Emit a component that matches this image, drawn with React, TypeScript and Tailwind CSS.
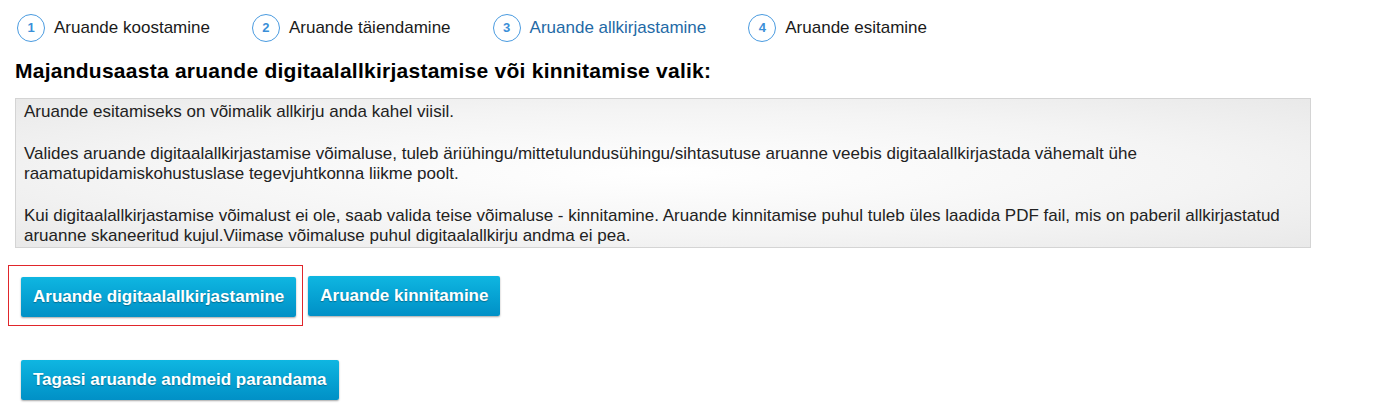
import React from "react";

const steps = [
  { n: 1, label: "Aruande koostamine", active: false },
  { n: 2, label: "Aruande täiendamine", active: false },
  { n: 3, label: "Aruande allkirjastamine", active: true },
  { n: 4, label: "Aruande esitamine", active: false },
];

function Btn({ children }: { children: React.ReactNode }) {
  return (
    <button className="h-10 px-3 rounded-[2px] bg-gradient-to-b from-[#0fb6e1] to-[#0190c6] text-white font-bold text-[17px] shadow-[0_1px_2px_rgba(0,0,0,0.35)] [text-shadow:0_1px_1px_rgba(0,0,0,0.3)]">
      {children}
    </button>
  );
}

export default function App() {
  return (
    <div className="w-[1376px] h-[410px] bg-white font-['Liberation_Sans',Arial,sans-serif] text-[#222]">
      {/* Steps */}
      <div className="flex items-center gap-[42px] pl-[17px] pt-[14px]">
        {steps.map((s) => (
          <div key={s.n} className="flex items-center gap-[9px]">
            <div className="w-[28px] h-[28px] rounded-full border-[1.5px] border-[#4a9be0] flex items-center justify-center text-[13px] font-bold text-[#3a8fd8]">
              {s.n}
            </div>
            <span className={`text-[17px] ${s.active ? "text-[#1f6aa6]" : "text-[#1a1a1a]"}`}>
              {s.label}
            </span>
          </div>
        ))}
      </div>

      <div className="px-[15px]">
        <h1 className="mt-[17px] text-[21px] tracking-[0.25px] font-bold text-black leading-[24px]">
          Majandusaasta aruande digitaalallkirjastamise või kinnitamise valik:
        </h1>

        {/* Info box */}
        <div className="mt-[15px] w-[1296px] border border-[#d4d4d4] bg-[radial-gradient(ellipse_at_center,#ffffff_0%,#f4f4f4_60%,#e9e9e9_100%)] pl-[8px] pr-3 pt-[3px] pb-[1px] text-[17px] leading-[20px] text-[#222]">
          <p>Aruande esitamiseks on võimalik allkirju anda kahel viisil.</p>
          <p className="mt-[22px]">
            Valides aruande digitaalallkirjastamise võimaluse, tuleb äriühingu/mittetulundusühingu/sihtasutuse aruanne veebis digitaalallkirjastada vähemalt ühe
            <br />
            raamatupidamiskohustuslase tegevjuhtkonna liikme poolt.
          </p>
          <p className="mt-[22px]">
            Kui digitaalallkirjastamise võimalust ei ole, saab valida teise võimaluse - kinnitamine. Aruande kinnitamise puhul tuleb üles laadida PDF fail, mis on paberil allkirjastatud
            <br />
            aruanne skaneeritud kujul.Viimase võimaluse puhul digitaalallkirju andma ei pea.
          </p>
        </div>

        {/* Action buttons */}
        <div className="mt-[17px] ml-[-7px] flex items-center gap-[5px]">
          <div className="border-[1.5px] border-[#e0262b] pl-[12px] pr-[6px] pt-[11px] pb-[8px]">
            <Btn>Aruande digitaalallkirjastamine</Btn>
          </div>
          <Btn>Aruande kinnitamine</Btn>
        </div>

        <div className="mt-[34px] ml-[6px]">
          <Btn>Tagasi aruande andmeid parandama</Btn>
        </div>
      </div>
    </div>
  );
}
